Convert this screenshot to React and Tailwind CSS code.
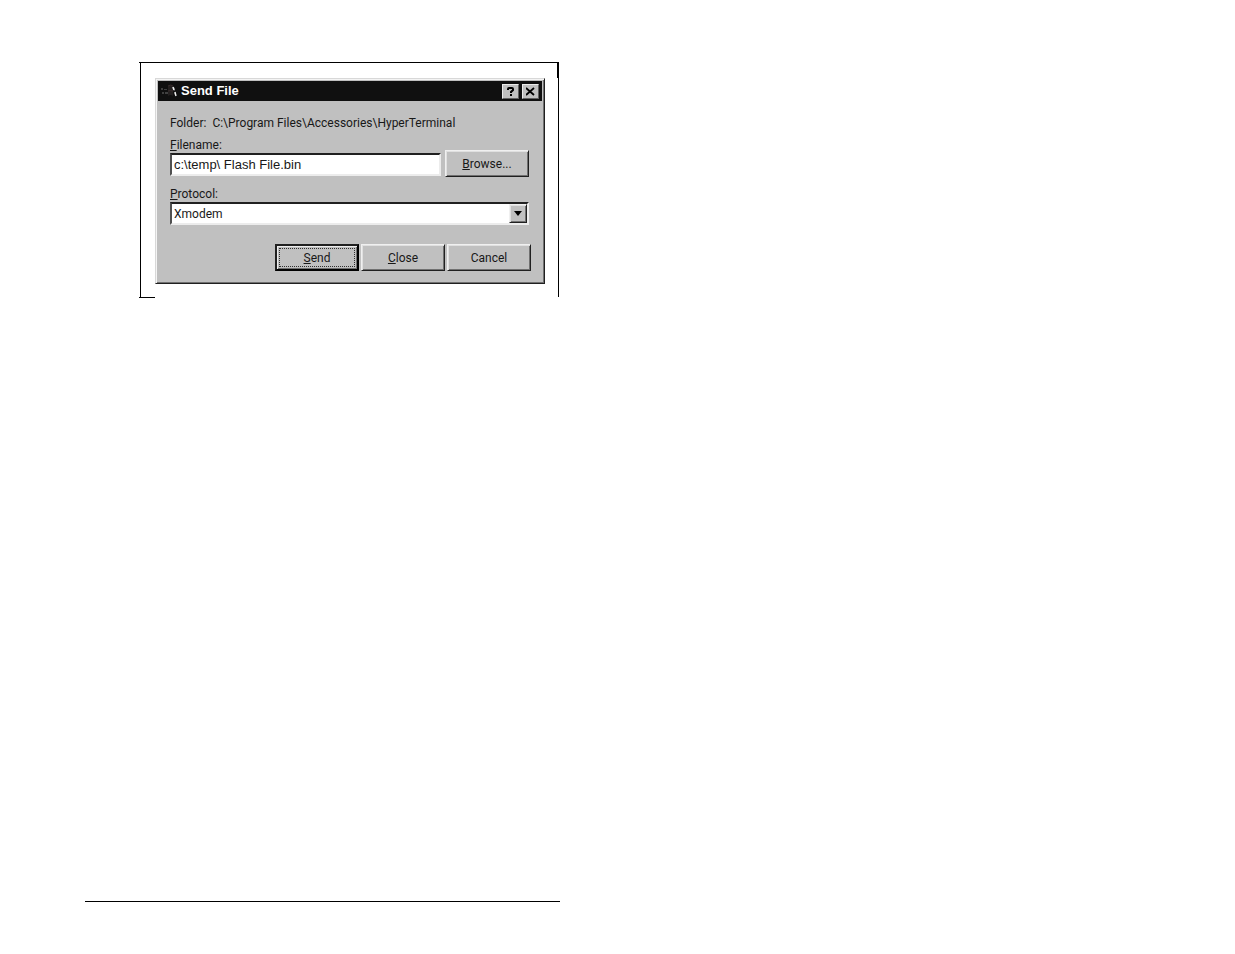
import React, { useState } from 'react';

const RAISED = 'bg-[#c0c0c0] border border-t-[#f0f0f0] border-l-[#f0f0f0] border-b-[#202020] border-r-[#202020] shadow-[inset_1px_1px_0_#e0e0e0,inset_-1px_-1px_0_#707070]';
const SUNKEN = 'bg-white border-2 border-t-[#202020] border-l-[#505050] border-b-[#ececec] border-r-[#ececec]';

const WindowsLogo = () => (
  <svg viewBox="0 0 18 16" className="w-[18px] h-4 shrink-0" aria-hidden="true">
    <path d="M1 5h2v2H1zM4 6h3v1H4zM2 9h2v2H2zM5 9h3v2H5z" fill="#404040" />
    <path d="M8 3q3-2 5 0v10q-2-2-5 0z" fill="#242020" />
    <path d="M8 8q2-1 5 0M8 3q3-2 5 0" stroke="#382c2c" fill="none" />
    <path d="M12 4h2l1 2v2l-2-1zM14 9l2 1v3l-2-2z" fill="#5c5c5c" />
    <path d="M13 4l1 3M15 9l1 4" stroke="#f0f0f0" strokeWidth="1.4" />
  </svg>
);

const TitleButton = ({ label, children }) => (
  <button
    type="button"
    aria-label={label}
    className="flex items-center justify-center w-[17px] h-[15px] bg-[#c0c0c0] border border-t-[#ececec] border-l-[#ececec] border-b-[#606060] border-r-[#606060]"
  >
    {children}
  </button>
);

const DialogButton = ({ accessKey, label, focused }) => (
  <button
    type="button"
    className={`w-[84px] h-[27px] leading-4 ${
      focused
        ? 'bg-[#c0c0c0] p-[2px] border-2 border-t-[#202020] border-l-[#202020] border-b-black border-r-black shadow-[inset_1px_1px_0_#ececec,inset_-1px_-1px_0_#707070]'
        : RAISED
    }`}
  >
    <span className={`flex items-center justify-center h-full ${focused ? 'border border-dotted border-[#303030]' : ''}`}>
      {accessKey && <u>{accessKey}</u>}
      {label}
    </span>
  </button>
);

const SendFileDialog = () => {
  const [filename, setFilename] = useState('c:\\temp\\ Flash File.bin');
  const [protocol, setProtocol] = useState('Xmodem');

  return (
    <form className="bg-[#c0c0c0] border border-t-[#d8d8d8] border-l-[#d8d8d8] border-b-[#202020] border-r-[#202020] shadow-[inset_1px_1px_0_#f4f4f4,inset_-1px_-1px_0_#707070] p-[2px] pb-3 font-['Roboto',sans-serif] text-[12px] leading-4 text-[#181818]">
      <div className="flex items-center h-5 bg-[#101010] text-white pl-[2px] pr-[3px]">
        <WindowsLogo />
        <h1 className="ml-[3px] flex-1 font-bold font-['Liberation_Sans',sans-serif] text-[13px]">Send File</h1>
        <div className="flex gap-[3px]">
          <TitleButton label="Help">
            <svg viewBox="0 0 9 9" className="w-[9px] h-[9px]" fill="none" stroke="#000" strokeWidth="2">
              <path d="M2 3V2q0-1 1-1h3q1 0 1 1v1L5 5v1M4 8h2" />
            </svg>
          </TitleButton>
          <TitleButton label="Close window">
            <svg viewBox="0 0 9 9" className="w-[9px] h-[9px]" stroke="#000" strokeWidth="1.8">
              <path d="M0 1l8 7M8 1L0 8" />
            </svg>
          </TitleButton>
        </div>
      </div>

      <div className="pl-3 pr-[11px] pt-[14px]">
        <p className="flex gap-[6px]">
          <span>Folder:</span>
          <span>C:\Program Files\Accessories\HyperTerminal</span>
        </p>

        <div className="flex items-end gap-1 mt-[6px]">
          <div className="flex-1 min-w-0 pb-px">
            <label htmlFor="filename" className="block"><u>F</u>ilename:</label>
            <input
              id="filename"
              type="text"
              value={filename}
              onChange={e => setFilename(e.target.value)}
              className={`block w-full h-[23px] px-[2px] outline-none font-['Liberation_Sans',sans-serif] text-[13px] ${SUNKEN}`}
            />
          </div>
          <div className="mr-[2px]">
            <DialogButton accessKey="B" label="rowse..." />
          </div>
        </div>

        <label htmlFor="protocol" className="block mt-[9px]"><u>P</u>rotocol:</label>
        <div className="relative mr-[2px]">
          <select
            id="protocol"
            value={protocol}
            onChange={e => setProtocol(e.target.value)}
            className={`block w-full h-[23px] px-[2px] appearance-none outline-none ${SUNKEN}`}
          >
            <option>Xmodem</option>
          </select>
          <span className={`absolute right-[2px] top-[2px] flex items-center justify-center w-[18px] h-[19px] pointer-events-none ${RAISED}`}>
            <svg viewBox="0 0 8 5" className="w-2 h-[5px]" aria-hidden="true">
              <path d="M0 0h8L4 5z" />
            </svg>
          </span>
        </div>

        <div className="flex justify-end gap-[2px] mt-[19px]">
          <DialogButton accessKey="S" label="end" focused />
          <DialogButton accessKey="C" label="lose" />
          <DialogButton label="Cancel" />
        </div>
      </div>
    </form>
  );
};

const App = () => (
  <div className="min-h-screen bg-white flex flex-col pl-[85px] pt-[62px] pb-[52px]">
    <main className="w-full max-w-[475px] flex-1 pl-[54px]">
      <div className="relative border-t border-black mr-px">
        <span className="absolute right-0 top-0 w-[2px] h-[15px] bg-black" />
        <div className="ml-px border-l border-r border-black pl-[14px] pr-[13px] pt-[15px] pb-[13px]">
          <SendFileDialog />
        </div>
      </div>
      <div className="w-4 border-t border-black" />
    </main>
    <footer className="w-full max-w-[475px] border-t border-black" />
  </div>
);

export default App;
